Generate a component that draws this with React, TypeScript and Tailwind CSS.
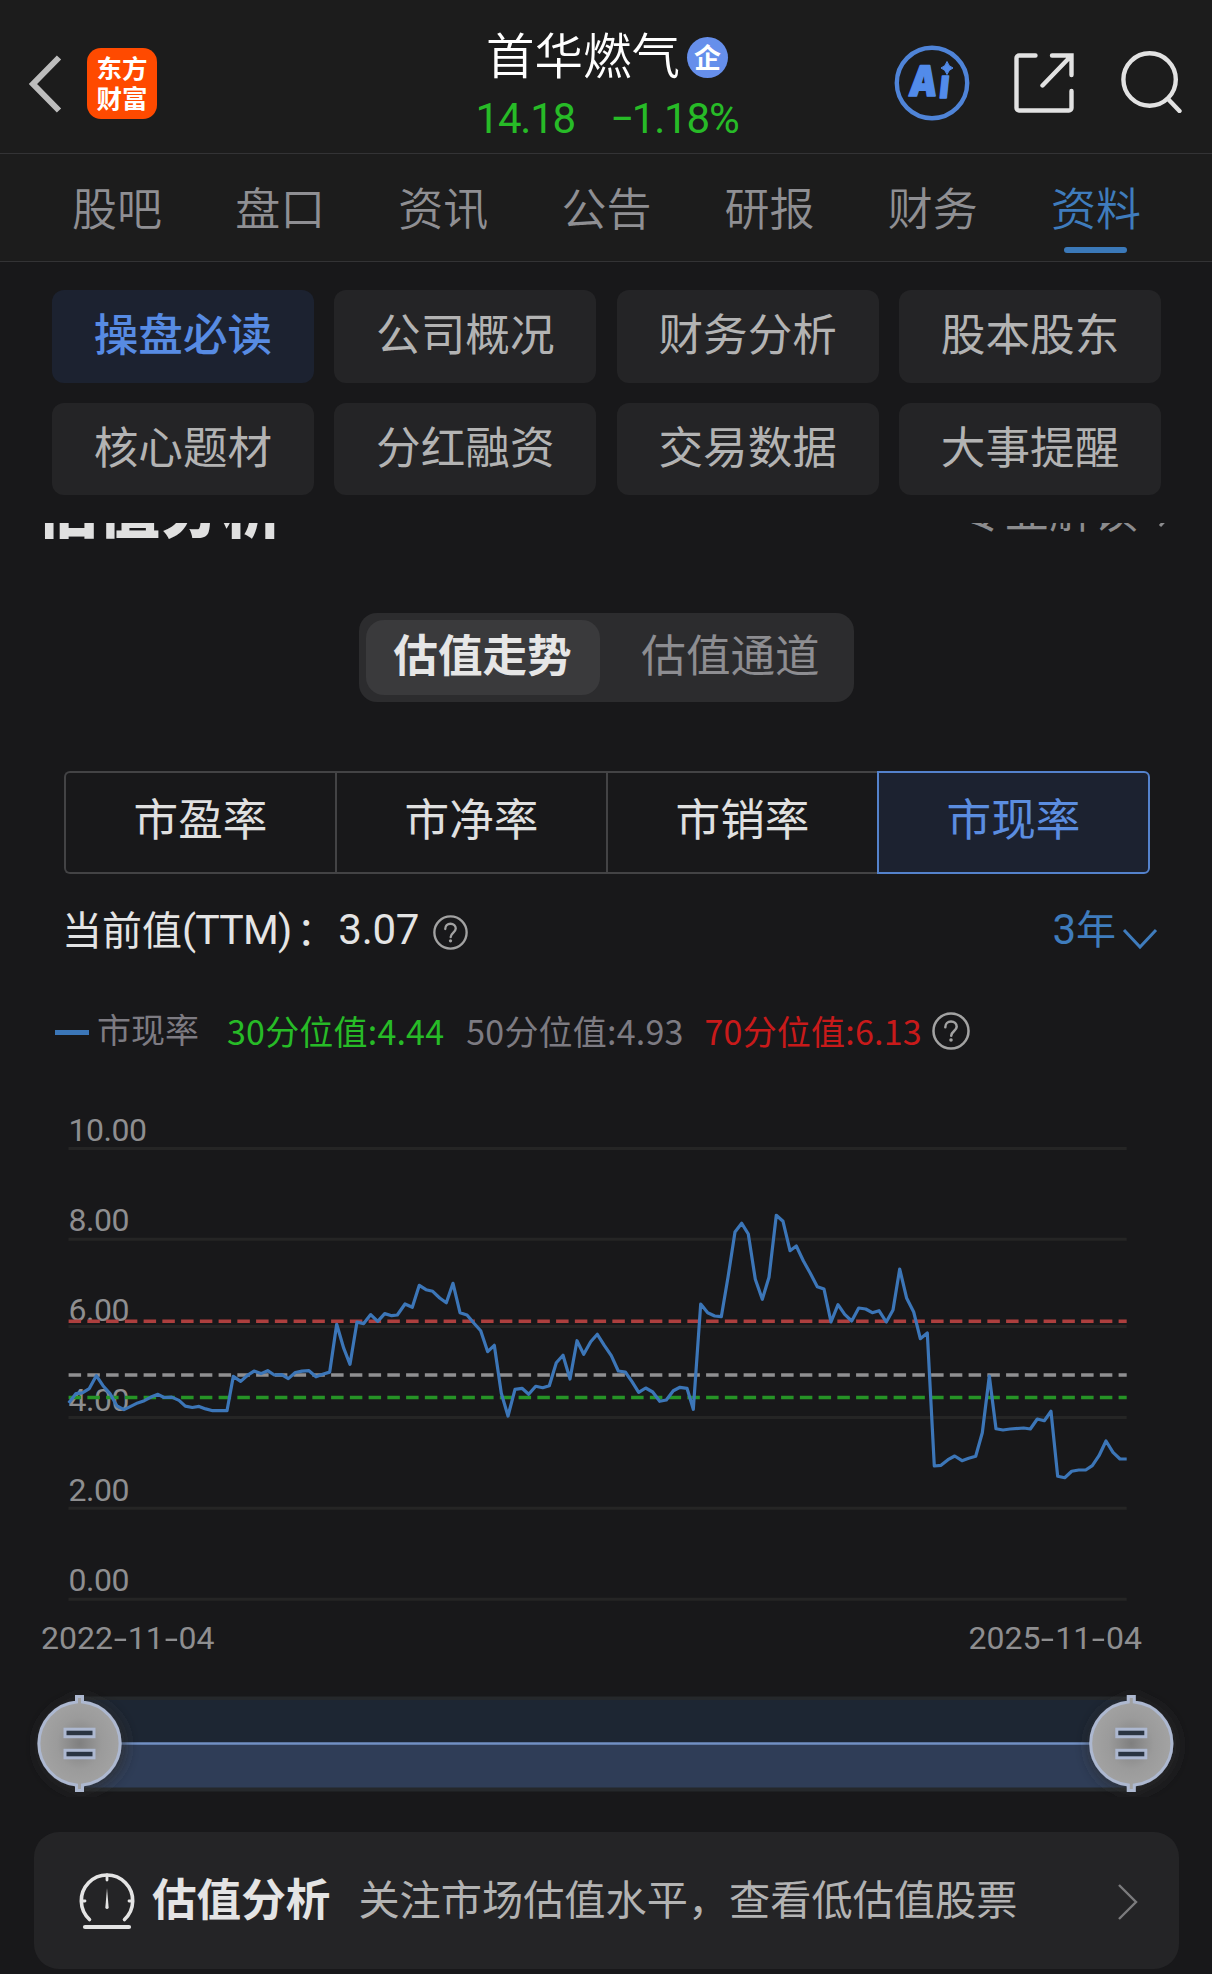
import { clsx } from "clsx";

const mainTabs = ["股吧", "盘口", "资讯", "公告", "研报", "财务", "资料"];

const sections = [
  "操盘必读",
  "公司概况",
  "财务分析",
  "股本股东",
  "核心题材",
  "分红融资",
  "交易数据",
  "大事提醒",
];

const metrics = ["市盈率", "市净率", "市销率", "市现率"];

const gridLines = [
  { label: "10.00", y: 1148.5, base: 1140.5 },
  { label: "8.00", y: 1239.2, base: 1230.5 },
  { label: "6.00", y: 1326.6, base: 1320.5 },
  { label: "4.00", y: 1417.6, base: 1410.5 },
  { label: "2.00", y: 1508.3, base: 1500.5 },
  { label: "0.00", y: 1599.3, base: 1590.5 },
];

const quantiles = [
  { y: 1321.3, color: "#ad3f3e" },
  { y: 1375, color: "#8f8f91" },
  { y: 1397.5, color: "#269426" },
];

const series =
  "68.7,1402.9 76,1393.6 82.3,1392.9 89.3,1388.6 96.3,1375.7 103,1385.7 110,1393.6 117,1406 124,1409.6 130.7,1406.4 137.7,1402.9 144.3,1400.7 151,1397.1 158,1394.3 164,1397.5 171.7,1397.1 179,1400.4 185.3,1406.1 192.3,1407.5 199,1406.4 205.7,1408.9 212.7,1410.7 227,1410.7 233.3,1376.4 240.7,1381.4 247,1375.7 254,1371.1 261,1373.6 267.7,1370.7 274.3,1375 281.7,1374.6 288.3,1378.6 295.3,1372.5 302,1371.1 309,1370.7 316,1376.8 322.7,1374.3 329.7,1372.1 336.7,1324.3 343.7,1348.2 350,1364.3 357,1322.1 363.7,1323.6 370.7,1314.6 377.7,1321.4 384.7,1313.6 391.7,1315.7 397.3,1315 " +
  "405,1304 412.3,1307.3 419.3,1285.3 426,1289.7 432.7,1291.3 439.7,1298 446.3,1302.7 453,1283.3 460,1312.7 467,1315 474,1323.3 480.7,1330.7 487.7,1351.7 494.3,1345.3 501.3,1393.3 508,1416 515,1389.3 522,1388.3 528.7,1394.3 535.7,1386.3 542.7,1387.7 549.3,1385.7 556.3,1362.7 563,1355.3 570,1379 577,1340.7 583.7,1354.3 590.7,1341.7 597.3,1334.3 604.3,1345.3 611.3,1355.7 618.3,1371 625.3,1372 632,1381.7 638.7,1392.3 645.7,1388 652.7,1392 659.7,1401.3 666.3,1400 673.3,1390.7 680,1387.3 687,1388.3 693.3,1409.3 700.7,1304 707.7,1312.7 714.7,1316 721.3,1316.7 728,1277.3 735,1232 741.7,1223.3 748.3,1234 755.3,1279.3 762.3,1299.3 769,1277.3 776.3,1215.3 783,1221.3 790,1250.7 796.3,1246 " +
  "803.3,1260.7 810.3,1273.3 817.3,1286.7 824,1289 831,1322 838,1304.7 844.7,1314.3 851.7,1321 858.7,1308 865.7,1309 872.3,1312.7 879,1310.7 886.3,1322 893,1310 899.7,1269 906.7,1298.3 913.7,1312 920.3,1338.7 927.3,1333 934.3,1466 941,1465.3 948,1459.7 954.7,1456 962,1460.7 968.7,1458.3 975.7,1456.3 982.3,1432.7 989.3,1376 996,1428.7 1003,1430 1010,1429 1023.7,1428 1030.3,1429 1037.3,1419 1044.3,1420.7 1051,1411.3 1057.7,1476.3 1064.7,1477.7 1071.7,1471.3 1078.7,1470 1085.7,1470 1092.3,1465.7 1099,1455.7 1106,1441 1113,1452.3 1120,1459 1126.7,1459";

function HelpIcon({ className }: { className?: string }) {
  return (
    <svg viewBox="0 0 36 36" fill="none" stroke="#a2a2a2" strokeWidth="2.4" className={className}>
      <circle cx="18" cy="18" r="16.6" />
      <path d="M12.6 14.4c0-3.3 2.3-5.4 5.4-5.4s5.4 2.1 5.4 5c0 3.8-5.2 4.3-5.2 8.6" strokeLinecap="round" />
      <circle cx="18" cy="26.6" r="1.7" fill="#a2a2a2" stroke="none" />
    </svg>
  );
}

function Header() {
  return (
    <header className="grid h-[154px] grid-cols-[1fr_auto_1fr] border-b border-[#333335] bg-[#1c1c1c]">
      <div className="flex items-center pt-[14px] pl-[27px]">
        <svg width="36" height="60" viewBox="0 0 36 60" fill="none" stroke="#bdbdbd" strokeWidth="6">
          <path d="M32 3.5 6 30l26 26.5" />
        </svg>
        <div className="ml-[24px] flex h-[71px] w-[70px] flex-col items-center justify-center rounded-[14px] bg-[#ff4a00] pb-[3px] text-[25.5px] leading-[30px] font-bold text-white">
          <span>东方</span>
          <span>财富</span>
        </div>
      </div>
      <div className="flex flex-col items-center pt-[23px] pl-[2px]">
        <div className="flex h-[60px] items-center gap-[7px]">
          <h1 className="text-[48.5px] leading-[60px] font-[350] text-white">首华燃气</h1>
          <span className="mt-[9px] flex size-[41px] items-center justify-center rounded-full bg-[#668feb] pb-[3px] text-[27px] leading-none font-bold text-white">
            企
          </span>
        </div>
        <div className="mt-[12px] flex gap-[36px] font-[Roboto] text-[42px] leading-[48px] tracking-[-1.2px] text-[#27bb27]">
          <span>14.18</span>
          <span>
            <span className="-mx-[1px]">−</span>1.18%
          </span>
        </div>
      </div>
      <div className="flex items-center justify-end pt-[13px] pr-[29px]">
        <svg width="76" height="76" viewBox="0 0 76 76">
          <circle cx="38" cy="38" r="35.2" fill="none" stroke="#4f84d8" strokeWidth="4.4" />
          <g fill="#528bea" stroke="#528bea" strokeWidth="1.6" strokeLinejoin="round" fontFamily="Inter, sans-serif" fontWeight="900">
            <text fontSize="42" transform="translate(14 51) skewX(-6) scale(0.84 1)">A</text>
            <text fontSize="40" transform="translate(44.5 53) skewX(-6) scale(0.8 1)">ı</text>
          </g>
          <path d="M53 16.500q1.500 5 6 6.500-4.500 1.500-6 6.500-1.500-5-6-6.500 4.500-1.500 6-6.500z" fill="#528bea" stroke="#528bea" strokeWidth="1" />
        </svg>
        <svg width="60" height="60" viewBox="0 0 60 60" fill="none" stroke="#e2e2e2" strokeWidth="4.4" strokeLinecap="round" className="ml-[44px]">
          <path d="M21.5 2.5H5A2.5 2.5 0 0 0 2.5 5v50A2.5 2.5 0 0 0 5 57.500h50a2.500 2.500 0 0 0 2.500-2.500V38M38 2.500h19.500V22M56 4 28.500 32.500" />
        </svg>
        <svg width="62" height="62" viewBox="0 0 62 62" fill="none" stroke="#e2e2e2" strokeWidth="4.4" strokeLinecap="round" className="-mt-[2px] ml-[47px]">
          <circle cx="28.6" cy="28.5" r="26.2" />
          <path d="m47.5 48.5 11 11.500" />
        </svg>
      </div>
    </header>
  );
}

function MainTabs() {
  return (
    <nav className="flex h-[108px] justify-between border-b border-[#333335] bg-[#1c1c1c] pr-[34.5px] pl-[35.5px]">
      {mainTabs.map((tab) => (
        <div
          key={tab}
          className={clsx(
            "flex w-[163px] flex-col items-center pt-[23px] text-[45px] leading-[60px] font-[350]",
            tab === "资料" ? "text-[#3f7cbd]" : "text-[#8f8f93]",
          )}
        >
          {tab}
          {tab === "资料" && <div className="mt-[10px] h-[6px] w-[63px] rounded-full bg-[#3b79b9]" />}
        </div>
      ))}
    </nav>
  );
}

function Chart() {
  return (
    <svg width="1212" height="510" viewBox="0 1100 1212 510" fill="none" className="block">
      {gridLines.map((line) => (
        <g key={line.label}>
          <path d={`M68.5 ${line.y}H1126.7`} stroke="#252525" strokeWidth="3" />
          <text x="68.5" y={line.base} fill="#8e8e90" fontFamily="Roboto, sans-serif" fontSize="32" letterSpacing="-0.5">
            {line.label}
          </text>
        </g>
      ))}
      {quantiles.map((q) => (
        <path key={q.y} d={`M68.6 ${q.y}H1126.7`} stroke={q.color} strokeWidth="3.6" strokeDasharray="12.5 6.25" />
      ))}
      <polyline points={series} stroke="#3c76b8" strokeWidth="3.2" strokeLinejoin="round" />
    </svg>
  );
}

function DateLabel({ value }: { value: string }) {
  return (
    <div className="flex">
      {value.split("-").map((part, i) => (
        <span key={i}>
          {i > 0 && <span className="mx-[3px] inline-block scale-x-150">-</span>}
          {part}
        </span>
      ))}
    </div>
  );
}

function Handle({ cx }: { cx: number }) {
  return (
    <g transform={`translate(${cx} 53.5)`} stroke="#adb8d0" strokeWidth="3">
      <path
        d="M-3-41.5V-47H3v5.500A41.700 41.700 0 0 1 3 41.500V47h-6v-5.500A41.700 41.700 0 0 1-3-41.500z"
        fill="url(#knob)"
        filter="url(#glow)"
      />
      <rect x="-14.5" y="-14.3" width="29" height="7.5" fill="#2a3441" />
      <rect x="-14.5" y="6.8" width="29" height="7.5" fill="#2a3441" />
    </g>
  );
}

function RangeSlider() {
  return (
    <svg width="1212" height="107" viewBox="0 0 1212 107" className="block">
      <defs>
        <radialGradient id="knob">
          <stop offset="0" stopColor="#7f7f7f" />
          <stop offset="0.55" stopColor="#9b9b9b" />
          <stop offset="1" stopColor="#a3a3a3" />
        </radialGradient>
        <filter id="glow" x="-50%" y="-50%" width="200%" height="200%">
          <feDropShadow dx="2" dy="2" stdDeviation="8" floodColor="#2e2e2e" floodOpacity="0.9" />
        </filter>
      </defs>
      <path d="M79.5 6.5h1052v95h-1052z" fill="#25282b" />
      <path d="M79.5 10h1052v43h-1052z" fill="#1d2633" />
      <path d="M79.5 54h1052v43.5h-1052z" fill="#2f3d57" />
      <path d="M79.5 53.5h1052" stroke="#7290c4" strokeWidth="2.4" />
      <Handle cx={79.5} />
      <Handle cx={1131.3} />
    </svg>
  );
}

export default function App() {
  return (
    <div className="h-[1974px] w-[1212px] overflow-hidden bg-[#18181a] font-['Noto_Sans_CJK_SC',sans-serif]">
      <Header />
      <MainTabs />

      <div className="mt-[28px] grid grid-cols-4 gap-x-[20.5px] gap-y-[20px] pr-[51px] pl-[52px]">
        {sections.map((name, i) => (
          <div
            key={name}
            className={clsx(
              "h-[92.5px] rounded-[12px] text-center text-[44.6px] leading-[60px]",
              i < 4 ? "pt-[12px]" : "pt-[12.5px]",
              i === 0 ? "bg-[#1c2230] font-medium text-[#578be3]" : "bg-[#242426] text-[#b3b3b3]",
            )}
          >
            {name}
          </div>
        ))}
      </div>

      {/* section heading scrolled under the sticky menu */}
      <div className="mt-[28px] flex h-[30px] justify-between overflow-hidden pr-[34px] pl-[37px]">
        <h2 className="-mt-[56px] text-[61.5px] leading-[80px] font-black text-[#e0e0e0]">估值分析</h2>
        <div className="-mt-[44px] flex text-[44.5px] leading-[60px] text-[#8c8c8e]">
          专业解读
          <svg width="20" height="36" viewBox="0 0 20 36" fill="none" stroke="#8c8c8e" strokeWidth="3" className="mt-[13px] ml-[20px]">
            <path d="m2 2 15 16L2 34" />
          </svg>
        </div>
      </div>

      <div className="mx-auto mt-[60px] flex h-[89px] w-[495px] rounded-[18px] bg-[#2c2c2e] p-[7px] text-[44.6px] leading-[60px]">
        <div className="h-[75px] w-[234px] rounded-[18px] bg-[#3a3a3c] pt-[3px] text-center font-bold text-[#e6e6e6]">估值走势</div>
        <div className="flex-1 pt-[3px] pl-[15px] text-center text-[#8d8d91]">估值通道</div>
      </div>

      <div className="mt-[69px] mr-[62px] ml-[64px] flex h-[103px] text-[44.6px] leading-[60px]">
        {metrics.map((name, i) => (
          <div
            key={name}
            className={clsx(
              "flex-1 border-y-2 pt-[14px] text-center",
              i === 0 && "rounded-l-[6px]",
              i === 3
                ? "rounded-r-[6px] border-x-2 border-[#5482cc] bg-[#1c2230] text-[#5b8de0]"
                : "border-l-2 border-[#434345] text-[#e0e0e0]",
            )}
          >
            {name}
          </div>
        ))}
      </div>

      <div className="mt-[26px] flex h-[60px] items-center pr-[54px] pl-[62px] text-[40px] leading-[60px] text-[#e4e4e4]">
        <span className="-mt-[4px]">当前值</span>
        <span className="font-[Roboto] text-[41px] tracking-[-0.8px]">(TTM)</span>
        <span className="-mt-[4px] mr-[2px] ml-[5px] w-[40px] font-[350]">：</span>
        <span className="font-[Roboto] text-[42px] tracking-[-0.3px]">3.07</span>
        <HelpIcon className="mt-[5px] ml-[14px] size-[35px]" />
        <span className="-mt-[4px] ml-auto text-[#3f7cbd]">
          <span className="font-[Roboto] text-[42px]">3</span>年
        </span>
        <svg width="36" height="22" viewBox="0 0 36 22" fill="none" stroke="#3f7cbd" strokeWidth="3" className="mt-[17px] ml-[6px]">
          <path d="m2 2 16 17L34 2" />
        </svg>
      </div>

      <div className="mt-[41px] flex h-[60px] items-center pl-[55px] text-[34px] leading-[60px] text-[#7d7b82]">
        <i className="mt-[3px] h-[5px] w-[34px] bg-[#3b76b8]" />
        <span className="-mt-[4px] ml-[8px]">市现率</span>
        <span className="ml-[28px] tracking-[0.2px] text-[#27bb27]">30分位值:4.44</span>
        <span className="ml-[22px] tracking-[0.2px]">50分位值:4.93</span>
        <span className="ml-[21px] tracking-[0.2px] text-[#c81a1a]">70分位值:6.13</span>
        <HelpIcon className="ml-[10px] size-[38px]" />
      </div>

      <div className="mt-[39px]">
        <Chart />
      </div>

      <div className="mt-[8px] flex h-[40px] justify-between pr-[70px] pl-[41px] font-[Roboto] text-[32px] leading-[40px] text-[#8e8e90]">
        <DateLabel value="2022-11-04" />
        <DateLabel value="2025-11-04" />
      </div>

      <div className="mt-[32px]">
        <RangeSlider />
      </div>

      <div className="mt-[35px] mr-[33px] ml-[34px] flex h-[137px] items-center rounded-[25px] bg-[#242426] pr-[40px] pl-[45px]">
        <svg width="56" height="58" viewBox="0 0 56 58" fill="none" stroke="#e4e4e4" strokeWidth="3.6" strokeLinecap="round">
          <path d="M10.5 47.5A25.7 25.7 0 1 1 45.5 47.5" />
          <path d="M28 3v5M3 29h3M50 29h3" strokeWidth="2.8" />
          <path d="M6 55h44" strokeWidth="4.2" />
          <path d="m28 16-1.7 20q1.7 2 3.4 0z" fill="#e4e4e4" stroke="none" />
        </svg>
        <span className="-mt-[8px] ml-[17px] text-[44.6px] leading-[60px] font-bold text-[#e4e4e4]">估值分析</span>
        <span className="-mt-[8px] ml-[28px] text-[41.2px] leading-[60px] text-[#b3b3b3]">关注市场估值水平，查看低估值股票</span>
        <svg width="22" height="38" viewBox="0 0 22 38" fill="none" stroke="#7b7b7d" strokeWidth="2.4" className="mt-[2px] ml-auto">
          <path d="m2 2 17 17L2 36" />
        </svg>
      </div>
    </div>
  );
}
